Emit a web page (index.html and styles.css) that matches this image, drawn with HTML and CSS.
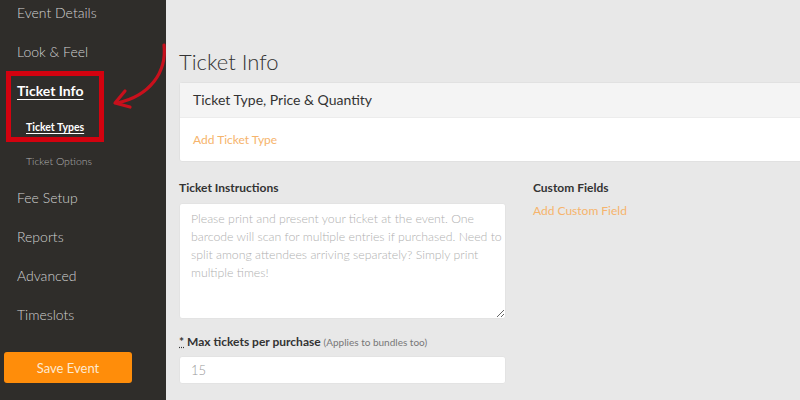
FILE: index.html
```html
<!DOCTYPE html>
<html>
<head>
<meta charset="utf-8">
<link rel="stylesheet" href="styles.css">
</head>
<body>
<div class="page">
  <aside class="sidebar">
    <nav class="nav">
      <a class="nav-item">Event Details</a>
      <a class="nav-item">Look &amp; Feel</a>
      <a class="nav-item active">Ticket Info</a>
      <a class="sub-item active">Ticket Types</a>
      <a class="sub-item">Ticket Options</a>
      <a class="nav-item">Fee Setup</a>
      <a class="nav-item">Reports</a>
      <a class="nav-item">Advanced</a>
      <a class="nav-item">Timeslots</a>
    </nav>
    <button class="save-btn">Save Event</button>
    <div class="highlight-box"></div>
  </aside>
  <svg class="arrow" width="80" height="80" viewBox="100 40 80 80">
    <path d="M164 45 C 167 72, 150 96, 117 103" fill="none" stroke="#c8101c" stroke-width="3.2" stroke-linecap="round"/>
    <path d="M125 91 L 115 103 L 130 107" fill="none" stroke="#c8101c" stroke-width="3.2" stroke-linecap="round" stroke-linejoin="round"/>
  </svg>
  <main class="main">
    <h1 class="title">Ticket Info</h1>
    <section class="card">
      <div class="card-header">Ticket Type, Price &amp; Quantity</div>
      <div class="card-body"><a class="link">Add Ticket Type</a></div>
    </section>
    <div class="columns">
      <div class="col-left">
        <label class="label">Ticket Instructions</label>
        <textarea class="textarea" placeholder="Please print and present your ticket at the event. One&#10;barcode will scan for multiple entries if purchased. Need to&#10;split among attendees arriving separately? Simply print&#10;multiple times!"></textarea>
        <label class="label label-max"><span class="req">*</span> Max tickets per purchase <span class="hint">(Applies to bundles too)</span></label>
        <input class="input" type="text" value="15">
      </div>
      <div class="col-right">
        <label class="label">Custom Fields</label>
        <a class="link small">Add Custom Field</a>
      </div>
    </div>
  </main>
</div>
</body>
</html>
```
FILE: styles.css
```css
* { box-sizing: border-box; }
html, body { margin: 0; padding: 0; }
body {
  font-family: Lato, "Open Sans", sans-serif;
  background: #e8e8e8;
  width: 800px;
  height: 400px;
  overflow: hidden;
}
.page {
  display: flex;
  height: 400px;
  position: relative;
}
.sidebar {
  width: 166px;
  flex: none;
  background: #2f2d2a;
  position: relative;
  display: flex;
  flex-direction: column;
}
.nav {
  display: flex;
  flex-direction: column;
  margin-top: -7px;
}
.nav-item {
  display: block;
  height: 39px;
  line-height: 39px;
  padding-left: 17px;
  font-size: 14px;
  font-weight: 300;
  color: #d2d2d2;
}
.nav-item.active {
  color: #ffffff;
  font-weight: 700;
  font-size: 14px;
  text-decoration: underline;
  text-underline-offset: 3px;
}
.sub-item {
  display: block;
  height: 34px;
  line-height: 34px;
  padding-left: 26px;
  font-size: 10.5px;
  font-weight: 300;
  color: #b4b4b4;
}
.sub-item.active {
  color: #ffffff;
  font-weight: 700;
  font-size: 10.5px;
  text-decoration: underline;
  text-underline-offset: 2px;
}
.save-btn {
  margin: 18px 0 0 4px;
  width: 128px;
  height: 31px;
  border: none;
  border-radius: 3px;
  background: #ff8d0a;
  color: #fde9d0;
  font-family: Lato, sans-serif;
  font-size: 13px;
}
.highlight-box {
  position: absolute;
  left: 6px;
  top: 71px;
  width: 98px;
  height: 71px;
  border: 5px solid #d3020f;
}
.arrow {
  position: absolute;
  left: 100px;
  top: 40px;
}
.main {
  flex: 1;
  padding: 47px 0 0 13px;
  overflow: hidden;
}
.title {
  margin: 0 0 5px;
  font-size: 22px;
  line-height: 30px;
  font-weight: 300;
  color: #333;
}
.card {
  width: 700px;
  background: #fff;
  border: 1px solid #e1e1e1;
  border-radius: 3px;
}
.card-header {
  height: 35px;
  line-height: 33px;
  padding-left: 13px;
  background: #f4f4f4;
  border-bottom: 1px solid #ececec;
  font-size: 14px;
  color: #333;
}
.card-body {
  height: 43px;
  line-height: 40px;
  padding-left: 13px;
}
.link {
  color: #f6b46c;
  font-size: 12px;
  font-weight: 400;
}
.link.small { display: block; line-height: 16px; margin-top: 7px; }
.columns {
  display: flex;
  gap: 27px;
  margin-top: 18px;
}
.col-left {
  width: 327px;
  display: flex;
  flex-direction: column;
}
.col-right {
  display: flex;
  flex-direction: column;
}
.label {
  display: block;
  font-size: 12px;
  line-height: 16px;
  font-weight: 700;
  color: #333;
}
.label-max { margin-top: 15px; font-size: 12px; }
.req { text-decoration: underline dotted; }
.hint { font-weight: 400; font-size: 10px; color: #777; }
.textarea {
  margin-top: 7px;
  width: 327px;
  height: 116px;
  border: 1px solid #e3e3e3;
  border-radius: 3px;
  background: #fff;
  padding: 6px 0 6px 11px;
  font-family: Lato, sans-serif;
  font-size: 12.3px;
  font-weight: 300;
  line-height: 18px;
  white-space: pre;
  overflow: hidden;
  resize: vertical;
}
.textarea::placeholder { color: #b0b0b0; }
.input {
  margin-top: 6px;
  width: 327px;
  height: 28px;
  border: 1px solid #e3e3e3;
  border-radius: 3px;
  background: #fff;
  padding: 0 11px;
  font-family: Lato, sans-serif;
  font-size: 13px;
  font-weight: 300;
  color: #999;
}
```
